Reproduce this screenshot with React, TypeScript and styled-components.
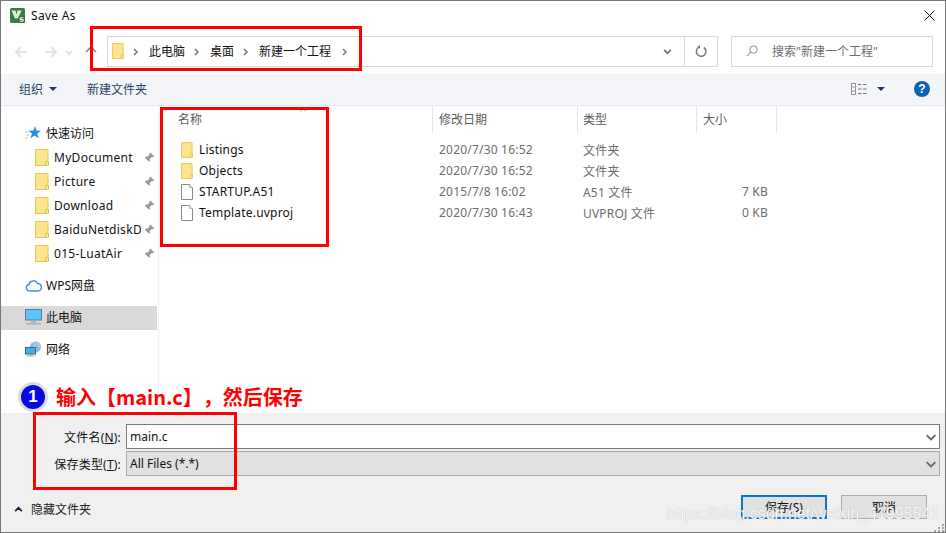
import React from "react";
import styled, { createGlobalStyle } from "styled-components";

const Global = createGlobalStyle`
  html, body { margin: 0; padding: 0; background: #fff; }
  * { box-sizing: border-box; }
  svg { flex: none; }
`;

const FONT = `"Noto Sans", "Noto Sans CJK SC", sans-serif`;
const COLS = "274px 145px 119px 80px";

const Win = styled.div`
  position: relative; width: 946px; height: 533px; overflow: hidden;
  display: flex; flex-direction: column; background: #fff;
  border: 1px solid #777; font-family: ${FONT}; font-size: 12px; color: #111;
`;
const TitleBar = styled.div`
  height: 35px; flex: none; display: flex; align-items: center;
  padding: 0 10px 6px 9px; gap: 6px;
`;
const TitleText = styled.span`flex: 1; letter-spacing: .3px;`;
const AddressRow = styled.div`
  height: 31px; flex: none; margin-bottom: 7px; display: flex; align-items: stretch;
  padding: 0 12px 0 13px;
`;
const NavButtons = styled.div`
  width: 93px; flex: none; display: flex; align-items: center; gap: 0;
`;
const NavSlot = styled.span<{ $w: number }>`
  width: ${p => p.$w}px; display: flex; justify-content: center; align-items: center;
`;
const AddressBox = styled.div`
  width: 611px; flex: none; border: 1px solid #d9d9d9; display: flex; align-items: center;
`;
const Crumbs = styled.div`
  flex: 1; display: flex; align-items: center; padding: 0 0 2px 4px; color: #111;
`;
const CrumbArrow = styled.span<{ $l: number; $r: number }>`
  display: inline-flex; margin: 2px ${p => p.$r}px 0 ${p => p.$l}px; color: #777;
`;
const AddrBtn = styled.div<{ $w: number }>`
  width: ${p => p.$w}px; align-self: stretch; display: flex; align-items: center; justify-content: center;
  color: #777;
`;
const AddrDivider = styled.div`width: 1px; align-self: stretch; background: #d9d9d9;`;
const SearchBox = styled.div`
  margin-left: 13px; width: 202px; flex: none; border: 1px solid #d9d9d9; display: flex; align-items: center;
  padding: 0 0 2px 14px; gap: 14px; color: #6d6d6d;
`;
const Toolbar = styled.div`
  height: 32px; flex: none; display: flex; align-items: center; background: #f4f5f8;
  border-bottom: 1px solid #e8e9ec; color: #2a4468; padding: 0 15px 2px 18px;
`;
const ToolItem = styled.span<{ $left?: number; $gap?: number }>`
  display: flex; align-items: center; gap: ${p => p.$gap ?? 6}px; margin-left: ${p => p.$left ?? 0}px;
`;
const Spacer = styled.div`flex: 1;`;
const Caret = styled.span`
  width: 0; height: 0; border-left: 4px solid transparent; border-right: 4px solid transparent;
  border-top: 4px solid #1c3a63; display: inline-block; margin-top: 1px;
`;
const Main = styled.div`flex: 1; display: flex; min-height: 0;`;
const Sidebar = styled.div`
  width: 158px; flex: none; border-right: 1px solid #f0f0f0; padding: 15px 1px 0 0;
  display: flex; flex-direction: column;
`;
const NavRow = styled.div<{ $indent?: boolean; $selected?: boolean; $top?: number; $lift?: boolean }>`
  height: 24px; flex: none; display: flex; align-items: center;
  padding-left: ${p => (p.$indent ? 34 : 23)}px;
  padding-bottom: ${p => (p.$lift ? 2 : 0)}px;
  gap: ${p => (p.$indent ? 5 : 4)}px;
  margin-top: ${p => p.$top ?? 0}px;
  background: ${p => (p.$selected ? "#d9d9d9" : "transparent")};
`;
const NavIcon = styled.span`width: 18px; height: 18px; flex: none; display: flex; align-items: center; justify-content: center;`;
const NavLabel = styled.span`
  width: 87px; flex: none; overflow: hidden; white-space: nowrap; letter-spacing: .3px;
`;
const PinWrap = styled.span`margin-left: -2px; display: flex;`;
const FileArea = styled.div`flex: 1; min-width: 0; position: relative;`;
const HeaderRow = styled.div`
  height: 27px; display: grid; grid-template-columns: ${COLS}; color: #5c5c5c;
`;
const HeaderCell = styled.div<{ $pad: number }>`
  display: flex; align-items: center; padding-left: ${p => p.$pad}px; height: 27px; padding-bottom: 1px;
  border-right: 1px solid #e5e5e5;
`;
const SortMark = styled.span`
  position: absolute; left: 140px; top: 0; display: flex; color: #aaa;
`;
const FileList = styled.div`padding-top: 6px;`;
const FileRow = styled.div`
  height: 21px; display: grid; grid-template-columns: ${COLS}; align-items: center; color: #6d6d6d;
`;
const NameCell = styled.div`
  display: flex; align-items: center; gap: 6px; padding-left: 22px; color: #111; letter-spacing: .2px;
`;
const DataCell = styled.div<{ $pad?: number; $right?: boolean }>`
  padding-left: ${p => p.$pad ?? 0}px;
  ${p => (p.$right ? "text-align: right; padding-right: 9px;" : "")}
  white-space: nowrap; letter-spacing: .2px;
`;
const Footer = styled.div`
  height: 119px; flex: none; background: #f0f0f0; padding: 11px 5px 0 0; display: flex; flex-direction: column;
`;
const FieldRow = styled.div<{ $mt?: number }>`
  display: flex; align-items: center; height: 25px; margin-top: ${p => p.$mt ?? 0}px;
`;
const FieldLabel = styled.label`
  width: 120px; flex: none; text-align: right; color: #111; white-space: nowrap; letter-spacing: .2px;
  u { text-decoration: underline; }
`;
const FieldBox = styled.div<{ $combo?: boolean }>`
  margin-left: 5px; flex: 1; height: 25px; display: flex; align-items: center; padding: 0 3px 0 3px;
  background: ${p => (p.$combo ? "#e1e1e1" : "#fff")};
  border: 1px solid ${p => (p.$combo ? "#adadad" : "#7a7a7a")};
  color: #111;
`;
const FieldValue = styled.span`flex: 1;`;
const FieldChevron = styled.span`display: flex; color: #666;`;
const Actions = styled.div`
  margin-top: 19px; height: 24px; display: flex; align-items: center; padding-right: 13px;
`;
const ToggleFolders = styled.div`
  display: flex; align-items: center; gap: 8px; padding: 4px 0 0 13px; flex: 1; color: #222;
`;
const Button = styled.div<{ $primary?: boolean }>`
  width: 86px; height: 24px; display: flex; align-items: center; justify-content: center;
  background: #e1e1e1; color: #111;
  border: ${p => (p.$primary ? "2px solid #0078d7" : "1px solid #adadad")};
  margin-left: ${p => (p.$primary ? 0 : 14)}px;
`;
const Grip = styled.svg`position: absolute; right: 0; bottom: 0;`;
const RedBox = styled.div<{ $l: number; $t: number; $w: number; $h: number }>`
  position: absolute; left: ${p => p.$l - 1}px; top: ${p => p.$t - 1}px;
  width: ${p => p.$w}px; height: ${p => p.$h}px; border: 3px solid #f00; pointer-events: none;
`;
const Badge = styled.div`
  position: absolute; left: 17px; top: 381px; width: 30px; height: 30px; border-radius: 50%;
  background: #0a0ae0; border: 3px solid #dcdcdc; color: #fff; font: bold 17px/24px "Liberation Sans", sans-serif;
  text-align: center;
`;
const Note = styled.div`
  position: absolute; left: 55px; top: 381px; color: #f00; font-size: 20px; line-height: 30px; font-weight: 700;
  white-space: nowrap; font-family: "Noto Sans CJK SC", sans-serif; text-spacing-trim: space-all;
`;
const Watermark = styled.div`
  position: absolute; left: 666px; top: 503px; color: rgba(255,255,255,.9); font: 16px/20px "Liberation Sans", sans-serif;
  text-shadow: 0 0 1px #aaa; white-space: nowrap;
`;
const Help = styled.span`
  width: 16px; height: 16px; border-radius: 50%; background: #0a64b4; color: #fff; margin-left: 29px;
  font: bold 12px/16px "Liberation Sans", sans-serif; text-align: center; display: block;
`;

const Folder = () => (
  <svg width="14" height="17" viewBox="0 0 14 17">
    <path d="M.5.5h12.500v12h0.500v4H.5z" fill="#fde58f" stroke="#e8c552" />
    <path d="M10.500 16.500v-4h3" fill="none" stroke="#e8c552" />
  </svg>
);
const SmallFolder = () => (
  <svg width="12" height="16" viewBox="0 0 13 17">
    <path d="M.5.5h11.500v12h.5v4H.5z" fill="#fde58f" stroke="#e8c552" />
    <path d="M10 16.500v-4h2.500" fill="none" stroke="#e8c552" />
  </svg>
);
const FileIcon = () => (
  <svg width="12" height="16" viewBox="0 0 12 16">
    <path d="M.5.5h8l3 3v12H.5z" fill="#fff" stroke="#8a8a8a" />
    <path d="M8.500.5v3h3" fill="#f2f2f2" stroke="#b0b0b0" />
  </svg>
);
const Chevron = ({ d = "M2 1l3 3-3 3", size = 8 }: { d?: string; size?: number }) => (
  <svg width={size} height={size} viewBox="0 0 8 8">
    <path d={d} fill="none" stroke="currentColor" strokeWidth="1.5" />
  </svg>
);
const Arrow = ({ d, color }: { d: string; color: string }) => (
  <svg width="14" height="14" viewBox="0 0 14 14">
    <path d={d} fill="none" stroke={color} strokeWidth="1.6" />
  </svg>
);
const Pin = () => (
  <svg width="11" height="11" viewBox="0 0 11 11">
    <path d="M6.500.5l4 4-1.200.6-1.500-.2-2 2 .2 1.800-1 1L2.800 7.600.5 10.500l2.200-3L.8 5.400l1-1 1.800.2 2-2-.1-1.500z" fill="#9a9a9a" />
  </svg>
);
const Star = () => (
  <svg width="16" height="16" viewBox="0 0 16 16">
    <path d="M10 1l1.400 4.500 4.400.2-3.500 2.800 1.200 4.800L9.600 10.600 5.400 13.300l1.500-4.800L3.600 5.700l4.800-.2z" fill="#2a8ce0" />
    <path d="M0 7h4M1 10h3M0 13h3" stroke="#9fd0f5" strokeWidth="1" />
  </svg>
);
const Cloud = () => (
  <svg width="17" height="13" viewBox="0 0 17 13">
    <path d="M4.500 12a3.300 3.300 0 0 1-.6-6.500A4.600 4.600 0 0 1 12.500 4.400a3.800 3.800 0 0 1 .3 7.600z" fill="#fff" stroke="#4a8df0" strokeWidth="1.5" />
  </svg>
);
const Monitor = () => (
  <svg width="17" height="16" viewBox="0 0 17 16">
    <rect x=".5" y=".5" width="16" height="10.500" fill="#5cc5f5" stroke="#5d7e96" />
    <rect x="6" y="11.500" width="5" height="2" fill="#9db2c0" />
    <rect x="1" y="14" width="15" height="1.500" fill="#9db2c0" />
  </svg>
);
const NetIcon = () => (
  <svg width="17" height="16" viewBox="0 0 17 16">
    <circle cx="10.500" cy="6" r="5.500" fill="#8fb9dc" />
    <path d="M8 1.500c2 1 3 3 1 5M12 1.500c1.500 2 1 4 3 4" stroke="#dfeef8" fill="none" />
    <rect x=".5" y="6.500" width="10" height="6.500" fill="#3db2ea" stroke="#44657c" />
    <rect x="3.500" y="13.500" width="4" height="1" fill="#7e97a8" />
    <rect x="1.500" y="14.500" width="8" height="1" fill="#9db2c0" />
  </svg>
);
const Logo = () => (
  <svg width="15" height="15" viewBox="0 0 15 15">
    <rect width="15" height="15" rx="1.500" fill="#3a7d3e" />
    <path d="M1.500 2.500h4l1 4 1-4h4l-3.500 8h-3z" fill="#dfeede" />
    <rect x="8.500" y="8.500" width="6" height="6" fill="#2f6b33" />
    <path d="M13.500 9.800h-3.500v1.700h3.200v1.700H9.700" fill="none" stroke="#fff" strokeWidth="1" />
  </svg>
);
const Refresh = () => (
  <svg width="12" height="13" viewBox="0 0 12 13">
    <path d="M8.800 2.500a4.800 4.800 0 1 1-4-.6" fill="none" stroke="#777" strokeWidth="1.500" />
    <path d="M5 .200v3.600L2 2z" fill="#777" />
  </svg>
);
const Search = () => (
  <svg width="12" height="12" viewBox="0 0 12 12">
    <circle cx="7.500" cy="4.500" r="3.700" fill="none" stroke="#8a8a8a" />
    <path d="M4.800 7.200L.8 11.200" stroke="#c98a8a" strokeWidth="1.200" />
  </svg>
);
const ViewIcon = () => (
  <svg width="16" height="12" viewBox="0 0 16 12">
    <rect x=".5" y=".5" width="4" height="11" fill="#fff" stroke="#999" />
    <path d="M1 4h3M1 8h3" stroke="#999" />
    <path d="M7 1.500h3.500M12 1.500h3.500M7 6h3.500M12 6h3.500M7 10.500h3.500M12 10.500h3.500" stroke="#777" />
  </svg>
);
const CloseIcon = () => (
  <svg width="11" height="11" viewBox="0 0 11 11">
    <path d="M.5.5l10 10M10.500.5l-10 10" stroke="#111" strokeWidth="1" />
  </svg>
);

const quick = ["MyDocument", "Picture", "Download", "BaiduNetdiskD", "015-LuatAir"];
const files = [
  { name: "Listings", folder: true, date: "2020/7/30 16:52", type: "文件夹", size: "" },
  { name: "Objects", folder: true, date: "2020/7/30 16:52", type: "文件夹", size: "" },
  { name: "STARTUP.A51", folder: false, date: "2015/7/8 16:02", type: "A51 文件", size: "7 KB" },
  { name: "Template.uvproj", folder: false, date: "2020/7/30 16:43", type: "UVPROJ 文件", size: "0 KB" },
];

export default function App() {
  return (
    <Win>
      <Global />
      <TitleBar>
        <Logo />
        <TitleText>Save As</TitleText>
        <CloseIcon />
      </TitleBar>
      <AddressRow>
        <NavButtons>
          <NavSlot $w={13}><Arrow d="M13 7H2M7 2L2 7l5 5" color="#dcdcdc" /></NavSlot>
          <NavSlot $w={17} />
          <NavSlot $w={13}><Arrow d="M1 7h11M7 2l5 5-5 5" color="#dcdcdc" /></NavSlot>
          <NavSlot $w={23}><Arrow d="M4 6l3 3 3-3" color="#dcdcdc" /></NavSlot>
          <NavSlot $w={21}><Arrow d="M7 13V2M2 7l5-5 5 5" color="#8a8a8a" /></NavSlot>
        </NavButtons>
        <AddressBox>
          <Crumbs>
            <SmallFolder />
            <CrumbArrow $l={8} $r={9}><Chevron /></CrumbArrow>
            <span>此电脑</span>
            <CrumbArrow $l={8} $r={9}><Chevron /></CrumbArrow>
            <span>桌面</span>
            <CrumbArrow $l={8} $r={9}><Chevron /></CrumbArrow>
            <span>新建一个工程</span>
            <CrumbArrow $l={10} $r={0}><Chevron /></CrumbArrow>
          </Crumbs>
          <AddrBtn $w={33}><Chevron d="M1 2.500l3 3 3-3" size={9} /></AddrBtn>
          <AddrDivider />
          <AddrBtn $w={32}><Refresh /></AddrBtn>
        </AddressBox>
        <SearchBox>
          <Search />
          <span>搜索"新建一个工程"</span>
        </SearchBox>
      </AddressRow>
      <Toolbar>
        <ToolItem>组织<Caret /></ToolItem>
        <ToolItem $left={30}>新建文件夹</ToolItem>
        <Spacer />
        <ToolItem $gap={10}><ViewIcon /><Caret /></ToolItem>
        <Help>?</Help>
      </Toolbar>
      <Main>
        <Sidebar>
          <NavRow>
            <NavIcon><Star /></NavIcon>
            <span>快速访问</span>
          </NavRow>
          {quick.map(q => (
            <NavRow key={q} $indent>
              <Folder />
              <NavLabel>{q}</NavLabel>
              <PinWrap><Pin /></PinWrap>
            </NavRow>
          ))}
          <NavRow $top={9} $lift>
            <NavIcon><Cloud /></NavIcon>
            <span>WPS网盘</span>
          </NavRow>
          <NavRow $top={8} $selected $lift>
            <NavIcon><Monitor /></NavIcon>
            <span>此电脑</span>
          </NavRow>
          <NavRow $top={8} $lift>
            <NavIcon><NetIcon /></NavIcon>
            <span>网络</span>
          </NavRow>
        </Sidebar>
        <FileArea>
          <SortMark><Chevron d="M1 5l3-3 3 3" size={8} /></SortMark>
          <HeaderRow>
            <HeaderCell $pad={19}>名称</HeaderCell>
            <HeaderCell $pad={6}>修改日期</HeaderCell>
            <HeaderCell $pad={5}>类型</HeaderCell>
            <HeaderCell $pad={6}>大小</HeaderCell>
          </HeaderRow>
          <FileList>
            {files.map(f => (
              <FileRow key={f.name}>
                <NameCell>
                  {f.folder ? <SmallFolder /> : <FileIcon />}
                  <span>{f.name}</span>
                </NameCell>
                <DataCell $pad={6}>{f.date}</DataCell>
                <DataCell $pad={5}>{f.type}</DataCell>
                <DataCell $right>{f.size}</DataCell>
              </FileRow>
            ))}
          </FileList>
        </FileArea>
      </Main>
      <Footer>
        <FieldRow>
          <FieldLabel>文件名(<u>N</u>):</FieldLabel>
          <FieldBox>
            <FieldValue>main.c</FieldValue>
            <FieldChevron><Chevron d="M0.500 2.500l3.500 3.500 3.500-3.500" size={10} /></FieldChevron>
          </FieldBox>
        </FieldRow>
        <FieldRow $mt={2}>
          <FieldLabel>保存类型(<u>T</u>):</FieldLabel>
          <FieldBox $combo>
            <FieldValue>All Files (*.*)</FieldValue>
            <FieldChevron><Chevron d="M0.500 2.500l3.500 3.500 3.500-3.500" size={10} /></FieldChevron>
          </FieldBox>
        </FieldRow>
        <Actions>
          <ToggleFolders>
            <Chevron d="M1 5.500l3-3 3 3" size={9} />
            <span>隐藏文件夹</span>
          </ToggleFolders>
          <Button $primary>保存(S)</Button>
          <Button>取消</Button>
        </Actions>
      </Footer>
      <Grip width="11" height="9" viewBox="0 0 11 9">
        <path d="M8 1h2v2H8zM4 4h2v2H4zM8 4h2v2H8zM0 7h2v2H0zM4 7h2v2H4zM8 7h2v2H8z" fill="#a5a5a5" />
      </Grip>
      <RedBox $l={90} $t={26} $w={272} $h={45} />
      <RedBox $l={160} $t={107} $w={169} $h={140} />
      <RedBox $l={33} $t={412} $w={204} $h={78} />
      <Badge>1</Badge>
      <Note>输入【main.c】，然后保存</Note>
      <Watermark>https://blog.csdn.net/weixin_41995541</Watermark>
    </Win>
  );
}
